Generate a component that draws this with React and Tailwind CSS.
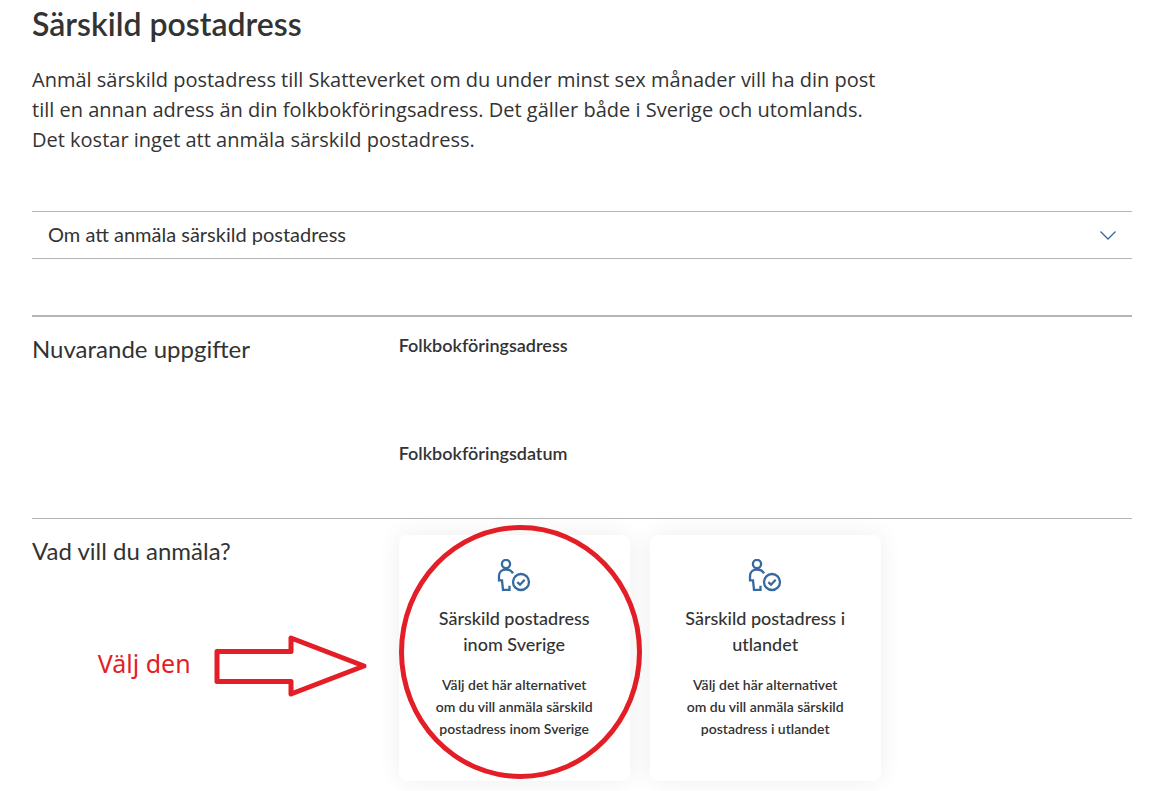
import React, { useState } from "react";

const options = [
  {
    id: "sverige",
    title: "Särskild postadress inom Sverige",
    text: "Välj det här alternativet om du vill anmäla särskild postadress inom Sverige",
    marked: true,
  },
  {
    id: "utlandet",
    title: "Särskild postadress i utlandet",
    text: "Välj det här alternativet om du vill anmäla särskild postadress i utlandet",
    marked: false,
  },
];

const PersonCheckIcon = () => (
  <svg
    viewBox="0 1 34 34"
    className="h-[34px] w-[34px]"
    fill="none"
    stroke="#36699f"
    strokeWidth="2.3"
    aria-hidden="true"
  >
    <circle cx="9" cy="6" r="4.1" />
    <path d="M16 15.400C14.600 12.800 12 11.500 9 11.500c-4.300 0-7 2.900-7 6.600v4.200h3l1 9.500h6.500v-4" />
    <circle cx="24" cy="24" r="8" />
    <path d="M20.300 24.200l2.700 2.500 4.700-5" />
  </svg>
);

const OptionCard = ({ option, onSelect }) => (
  <div className="relative flex-1">
    <button
      type="button"
      onClick={() => onSelect(option.id)}
      className="flex h-full w-full flex-col items-center rounded-lg bg-white px-8 pt-6 pb-[41px] text-center shadow-[0_0_24px_rgba(0,0,0,0.07)]"
    >
      <PersonCheckIcon />
      <span className="mt-3 text-lg leading-[26px] font-medium">{option.title}</span>
      <span className="mt-[17px] text-sm leading-[22px] font-semibold">{option.text}</span>
    </button>

    {/* Röd ring */}
    {option.marked && (
      <div className="pointer-events-none absolute -top-2.5 -right-3 bottom-0.5 left-0 rounded-[50%] border-5 border-[#e31e26]" />
    )}
  </div>
);

const Section = ({ title, children, note, className }) => (
  <section className={`flex border-[#b5b5b5] pt-4 ${className}`}>
    <div className="w-1/3 shrink-0">
      <h2 className="text-2xl leading-8">{title}</h2>
      {note}
    </div>
    {children}
  </section>
);

const ArrowNote = () => (
  <div className="mt-[67px] flex items-center justify-end gap-5 pr-8">
    <span className="pb-1.5 font-['Noto_Sans',sans-serif] text-[25px] leading-8 text-[#e31e26]">Välj den</span>
    <svg
      viewBox="0 0 156 64"
      className="h-16 w-[156px]"
      fill="none"
      stroke="#e31e26"
      strokeWidth="5"
      strokeLinejoin="round"
      aria-hidden="true"
    >
      <path d="M6 17.500H80V4L153 32 80 60V47.500H6z" />
    </svg>
  </div>
);

const App = () => {
  const [open, setOpen] = useState(false);
  const [, setSelected] = useState(null);

  return (
    <main className="bg-white pt-1 pr-6 pb-2.5 pl-8 font-['Lato',sans-serif] text-[#333]">
      <h1 className="text-[32px] leading-10 font-semibold">Särskild postadress</h1>
      <p className="mt-[21px] max-w-[860px] font-['Open_Sans',sans-serif] text-xl leading-[30px]">
        Anmäl särskild postadress till Skatteverket om du under minst sex månader vill ha din post
        till en annan adress än din folkbokföringsadress. Det gäller både i Sverige och utomlands.
        Det kostar inget att anmäla särskild postadress.
      </p>

      <button
        type="button"
        aria-expanded={open}
        onClick={() => setOpen(!open)}
        className="mt-14 flex w-full items-center justify-between border-y border-[#b5b5b5] px-4 py-2 text-left text-xl"
      >
        <span className="pb-0.5 leading-7">Om att anmäla särskild postadress</span>
        <svg
          viewBox="0 0 16 10"
          className="h-2.5 w-4"
          fill="none"
          stroke="#36699f"
          strokeWidth="1.3"
          aria-hidden="true"
        >
          <path d="M.5 1.500L8 9 15.500 1.500" />
        </svg>
      </button>

      <Section title="Nuvarande uppgifter" className="mt-14 border-t-2 pb-[25px]">
        <dl className="flex flex-col gap-14 text-lg leading-6">
          <div>
            <dt className="font-semibold">Folkbokföringsadress</dt>
            <dd className="min-h-7" />
          </div>
          <div>
            <dt className="font-semibold">Folkbokföringsdatum</dt>
            <dd className="min-h-7" />
          </div>
        </dl>
      </Section>

      <Section title="Vad vill du anmäla?" className="border-t" note={<ArrowNote />}>
        <div className="flex max-w-[482px] flex-1 gap-5">
          {options.map((option) => (
            <OptionCard key={option.id} option={option} onSelect={setSelected} />
          ))}
        </div>
      </Section>
    </main>
  );
};

export default App;
